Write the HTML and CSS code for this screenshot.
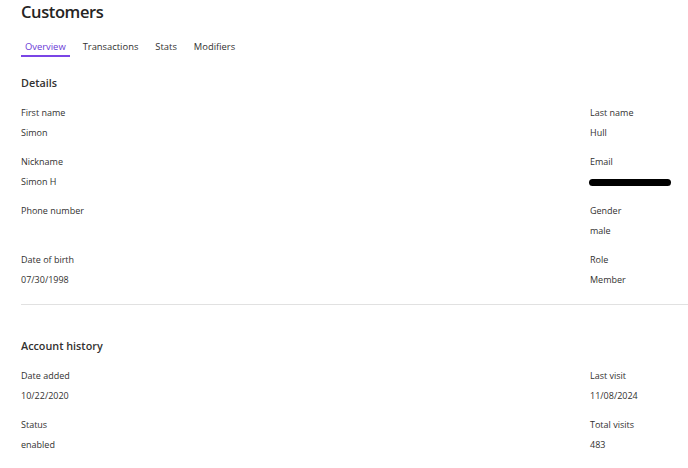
FILE: index.html
```html
<!DOCTYPE html>
<html lang="en">
<head>
  <meta charset="UTF-8">
  <meta name="viewport" content="width=device-width, initial-scale=1.0">
  <title>Customers</title>
  <link rel="stylesheet" href="styles.css">
</head>
<body>
  <h1 class="page-title">Customers</h1>

  <!-- Tabs -->
  <nav class="tabs">
    <a class="tab active" href="#">Overview</a>
    <a class="tab" href="#">Transactions</a>
    <a class="tab" href="#">Stats</a>
    <a class="tab" href="#">Modifiers</a>
  </nav>

  <!-- Details -->
  <section class="section">
    <h2 class="section-title">Details</h2>
    <div class="fields">
      <div class="field">
        <p class="label">First name</p>
        <p class="value">Simon</p>
      </div>
      <div class="field">
        <p class="label">Last name</p>
        <p class="value">Hull</p>
      </div>
      <div class="field">
        <p class="label">Nickname</p>
        <p class="value">Simon H</p>
      </div>
      <div class="field">
        <p class="label">Email</p>
        <p class="value"><span class="redacted"></span></p>
      </div>
      <div class="field">
        <p class="label">Phone number</p>
        <p class="value"></p>
      </div>
      <div class="field">
        <p class="label">Gender</p>
        <p class="value">male</p>
      </div>
      <div class="field">
        <p class="label">Date of birth</p>
        <p class="value">07/30/1998</p>
      </div>
      <div class="field">
        <p class="label">Role</p>
        <p class="value">Member</p>
      </div>
    </div>
  </section>

  <hr class="divider">

  <!-- Account history -->
  <section class="section history">
    <h2 class="section-title">Account history</h2>
    <div class="fields">
      <div class="field">
        <p class="label">Date added</p>
        <p class="value">10/22/2020</p>
      </div>
      <div class="field">
        <p class="label">Last visit</p>
        <p class="value">11/08/2024</p>
      </div>
      <div class="field">
        <p class="label">Status</p>
        <p class="value">enabled</p>
      </div>
      <div class="field">
        <p class="label">Total visits</p>
        <p class="value">483</p>
      </div>
    </div>
  </section>
</body>
</html>
```

FILE: styles.css
```css
* {
  margin: 0;
  padding: 0;
  box-sizing: border-box;
}

body {
  font-family: "Open Sans", "Noto Sans", sans-serif;
  color: #323130;
  background-color: #ffffff;
  padding-left: 21px;
  overflow: hidden;
}

.page-title {
  font-size: 16.5px;
  font-weight: 600;
  line-height: 24px;
  letter-spacing: -0.4px;
  color: #252423;
}

/* Tabs */
.tabs {
  display: flex;
  gap: 9px;
  margin-top: 13px;
}

.tab {
  display: block;
  padding: 1px 4px 0;
  font-size: 9.4px;
  line-height: 17px;
  color: #323130;
  text-decoration: none;
  border-bottom: 2px solid transparent;
}

.tab.active {
  color: #6a3bd6;
  border-bottom-color: #7a45e6;
}

/* Sections */
.section {
  margin-top: 16px;
}

.section.history {
  margin-top: 31px;
}

.section-title {
  font-size: 10.8px;
  font-weight: 600;
  line-height: 20px;
  color: #323130;
}

.fields {
  display: grid;
  grid-template-columns: 1fr 98px;
  row-gap: 9px;
  margin-top: 10px;
}

.label,
.value {
  font-size: 9px;
  line-height: 20px;
  height: 20px;
}

.redacted {
  display: inline-block;
  width: 82px;
  height: 7px;
  margin-left: -1px;
  border-radius: 4px;
  background-color: #000;
  vertical-align: -1px;
}

.divider {
  border: none;
  border-top: 1px solid #e1e1e1;
  margin-top: 14px;
}
```
